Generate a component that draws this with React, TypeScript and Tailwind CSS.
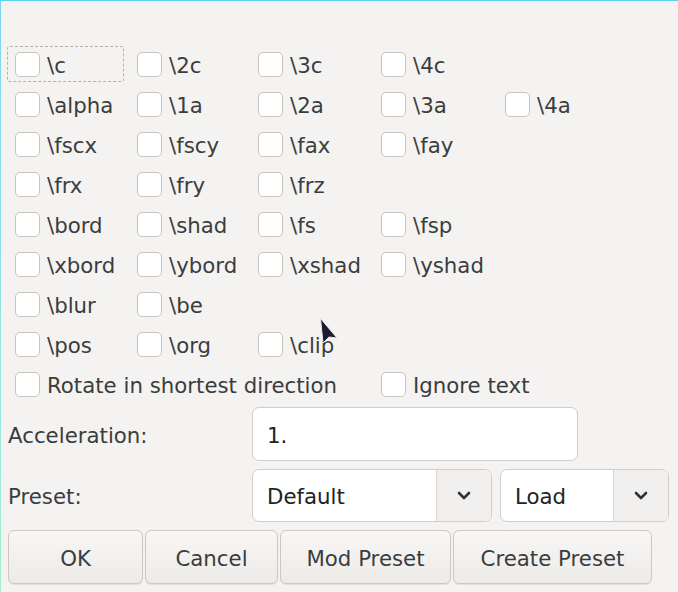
import React from 'react';

const font = { fontFamily: '"DejaVu Sans", "Liberation Sans", sans-serif' };

const rows: string[][] = [
  ['\\c', '\\2c', '\\3c', '\\4c'],
  ['\\alpha', '\\1a', '\\2a', '\\3a', '\\4a'],
  ['\\fscx', '\\fscy', '\\fax', '\\fay'],
  ['\\frx', '\\fry', '\\frz'],
  ['\\bord', '\\shad', '\\fs', '\\fsp'],
  ['\\xbord', '\\ybord', '\\xshad', '\\yshad'],
  ['\\blur', '\\be'],
  ['\\pos', '\\org', '\\clip'],
];

const Box = () => (
  <span className="w-[25px] h-[25px] shrink-0 rounded-[5px] border border-[#c9c3bb] bg-white shadow-[inset_0_1px_0_#fff]" />
);

const Check = ({ label, focus = false, className = '' }: { label: string; focus?: boolean; className?: string }) => (
  <div
    className={`flex items-center gap-[7px] h-[36px] pl-[7px] ${
      focus ? 'border border-dashed border-[#b4b2ae] rounded-[3px] -ml-px' : ''
    } ${className}`}
  >
    <Box />
    <span className="pt-[4px] text-[21.3px] text-[#3a3d3e] leading-none">{label}</span>
  </div>
);

const Chevron = () => (
  <svg width="14" height="9" viewBox="0 0 14 9">
    <path d="M2 2 L7 7 L12 2" fill="none" stroke="#2e3436" strokeWidth="2.6" strokeLinecap="round" strokeLinejoin="round" />
  </svg>
);

const Combo = ({ value, className }: { value: string; className: string }) => (
  <div className={`flex h-[53px] rounded-[7px] border border-[#d2cdc7] bg-white overflow-hidden ${className}`}>
    <div className="flex-1 flex items-center pl-[14px] pt-[3px] text-[21.3px] text-[#222]">{value}</div>
    <div className="w-[55px] flex items-center justify-center border-l border-[#d8d4cf] bg-[#f1f0ee]">
      <Chevron />
    </div>
  </div>
);

const Button = ({ label, className }: { label: string; className: string }) => (
  <button
    className={`h-[54px] pt-[3px] rounded-[6px] border border-[#cdc7c1] bg-gradient-to-b from-[#f8f7f6] to-[#edebe8] text-[21.3px] text-[#3a3d3e] shadow-[0_1px_0_#e4e1dd] ${className}`}
  >
    {label}
  </button>
);

export default function App() {
  return (
    <div style={font} className="relative w-[678px] h-[592px] bg-[#f4f3f1] flex flex-col overflow-hidden">
      <div className="h-px bg-[#5dd0f4]" />
      <div className="flex flex-1">
        <div className="w-px bg-gradient-to-b from-[#7fd5f0] to-[#a4f0d6]" />
        <div className="flex-1 pl-[7px] pt-[45px] flex flex-col">
          <div className="grid grid-cols-[122px_121px_123px_124px_auto] gap-y-[4px]">
            {rows.map((r, i) =>
              [0, 1, 2, 3, 4].map((j) =>
                r[j] ? (
                  <Check key={`${i}-${j}`} label={r[j]} focus={i === 0 && j === 0} className={i === 0 && j === 0 ? 'w-[117px]' : ''} />
                ) : (
                  <div key={`${i}-${j}`} />
                ),
              ),
            )}
            <Check label="Rotate in shortest direction" className="col-span-3" />
            <Check label="Ignore text" className="col-span-2" />
          </div>
          <div className="flex items-center mt-[5px] h-[54px]">
            <span className="w-[244px] pt-[3px] text-[21.3px] text-[#3a3d3e]">Acceleration:</span>
            <div className="w-[326px] h-[54px] rounded-[7px] border border-[#d2cdc7] bg-white flex items-center pl-[14px] pt-[3px] text-[21.3px] text-[#222]">
              1.
            </div>
          </div>
          <div className="flex items-center mt-[8px]">
            <span className="w-[244px] pt-[3px] text-[21.3px] text-[#3a3d3e]">Preset:</span>
            <Combo value="Default" className="w-[240px]" />
            <Combo value="Load" className="w-[169px] ml-[8px]" />
          </div>
          <div className="flex gap-[2px] mt-[8px]">
            <Button label="OK" className="w-[135px]" />
            <Button label="Cancel" className="w-[133px]" />
            <Button label="Mod Preset" className="w-[171px]" />
            <Button label="Create Preset" className="w-[199px]" />
          </div>
        </div>
      </div>
      <svg className="absolute left-[319px] top-[317px]" width="22" height="30" viewBox="0 0 22 30">
        <path d="M1.5 1.5 L4 26 L10 20 L18 21 Z" fill="#1d1c2c" stroke="#e8e6f0" strokeWidth="1" strokeLinejoin="round" />
      </svg>
    </div>
  );
}
